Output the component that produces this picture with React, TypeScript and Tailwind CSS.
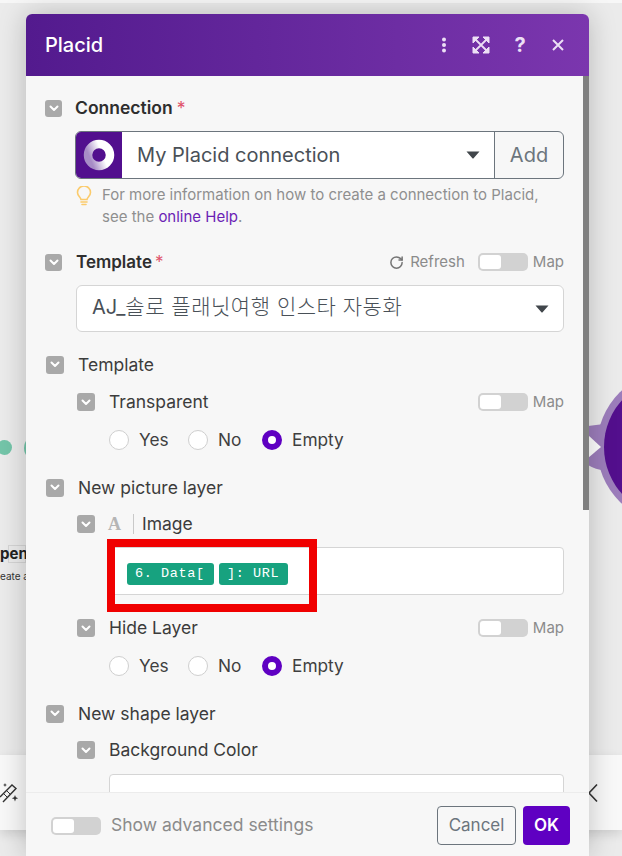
import React from 'react';
import { RotateCw } from 'lucide-react';

const font = { fontFamily: 'Inter, "Noto Sans CJK KR", sans-serif' };

function Check({ size = 18 }: { size?: number }) {
  return (
    <span
      className={`flex shrink-0 items-center justify-center rounded-[3px] bg-[#a9a9a9] ${size === 17 ? 'h-[17px] w-[17px]' : 'h-[18px] w-[18px]'}`}
    >
      <svg width="10" height="7" viewBox="0 0 10 7" fill="none" stroke="#fff" strokeWidth="2" strokeLinecap="round" strokeLinejoin="round">
        <path d="M1.5 1.5 5 5l3.5-3.5" />
      </svg>
    </span>
  );
}

function Toggle() {
  return (
    <span className="flex h-[18px] w-[50px] rounded-[5px] bg-[#d2d2d2] p-[2px]">
      <span className="h-[14px] w-[21px] rounded-[3px] bg-white" />
    </span>
  );
}

function MapToggle() {
  return (
    <span className="ml-auto flex items-center gap-[5px] text-[15px] text-[#8b8b8b]">
      <Toggle />
      <span className="mt-[1px]">Map</span>
    </span>
  );
}

function Caret() {
  return (
    <svg width="14" height="8" viewBox="0 0 14 8" className="shrink-0">
      <path d="M0.5 0.5h13L7.8 7a1 1 0 0 1-1.6 0z" fill="#41464b" />
    </svg>
  );
}

function Radio({ label, checked, className }: { label: string; checked?: boolean; className?: string }) {
  return (
    <span className={`flex items-center gap-[10px] ${className ?? ''}`}>
      {checked ? (
        <span className="h-[20px] w-[20px] rounded-full border-[6px] border-[#5f00c2] bg-white" />
      ) : (
        <span className="h-[20px] w-[20px] rounded-full border border-[#cfcfcf] bg-white" />
      )}
      {label}
    </span>
  );
}

function Radios({ className }: { className: string }) {
  return (
    <div className={`flex h-[20px] items-center pl-[83px] text-[17.3px] leading-none text-[#3f3f3f] ${className}`}>
      <Radio label="Yes" className="w-[79px]" />
      <Radio label="No" className="w-[74px]" />
      <Radio label="Empty" checked />
    </div>
  );
}

function Group({ label, className }: { label: string; className: string }) {
  return (
    <div className={`flex h-[19px] items-center gap-[14px] pl-[20px] text-[17.5px] text-[#3c3c3c] ${className}`}>
      <Check />
      <span className="mt-[2px]">{label}</span>
    </div>
  );
}

function Sub({ label, map, className }: { label: string; map?: boolean; className: string }) {
  return (
    <div className={`flex h-[18px] items-center gap-[14px] pl-[51px] pr-[25px] text-[17.5px] text-[#3c3c3c] ${className}`}>
      <Check />
      <span className="mt-[1px]">{label}</span>
      {map && <MapToggle />}
    </div>
  );
}

function Chip({ text, wide }: { text: string; wide?: boolean }) {
  return (
    <span
      className={`flex h-[22px] items-center whitespace-pre rounded-[3px] bg-[#17a27f] pl-[8px] text-[13.5px] tracking-[0.6px] text-white ${wide ? 'w-[69px]' : 'w-[87px]'}`}
      style={{ fontFamily: '"Liberation Mono", monospace' }}
    >
      {text}
    </span>
  );
}

export default function App() {
  return (
    <div className="relative h-[856px] w-[622px] overflow-hidden bg-[#ebebeb]" style={font}>
      <div className="h-[3px] bg-[#f7f7f7]" />

      {/* canvas behind the dialog */}
      <div className="absolute left-0 top-[755px] h-[75px] w-full bg-[#f8f8f8] shadow-[0_4px_10px_rgba(0,0,0,0.12)]" />
      <svg className="absolute left-0 top-[782px]" width="20" height="22" viewBox="0 0 20 22" fill="none" stroke="#333" strokeWidth="1.4">
        <path d="M0 15 12 3l4 3.500L3 20" />
        <path d="M3 11l4 4M6 8l4 4" strokeWidth="1" />
        <path d="M15 13l.9 2.300 2.300.9-2.300.9-.9 2.300-.9-2.300-2.300-.9 2.300-.9z" fill="#333" stroke="none" />
        <path d="M5 1l.6 1.400 1.400.6-1.400.6L5 5l-.6-1.400L3 3l1.400-.6z" fill="#333" stroke="none" />
      </svg>
      <svg className="absolute left-[587px] top-[783px]" width="12" height="20" viewBox="0 0 12 20" fill="none" stroke="#333" strokeWidth="1.6">
        <path d="M10 1.500 2 10l8 8.500" />
      </svg>
      <span className="absolute left-[-3px] top-[440px] h-[15px] w-[15px] rounded-full bg-[#74c5a9]" />
      <span className="absolute left-[24px] top-[435px] h-[26px] w-[26px] rounded-full bg-[#74c5a9]" />
      <span className="absolute left-[8px] top-[545px] h-[18px] w-[18px] border border-[#d5d5d5]" />
      <span className="absolute left-0 top-[544px] text-[15px] font-bold leading-5 text-[#222]">pen.</span>
      <span className="absolute left-0 top-[568px] text-[10px] leading-4 text-[#333]">eate a</span>
      <span className="absolute left-[597px] top-[370px] h-[154px] w-[154px] rounded-full bg-[#9c7dbb]" />
      <svg className="absolute left-[588px] top-[420px]" width="16" height="54" viewBox="0 0 16 54">
        <path d="M0 6Q8 5 16 4V50Q8 50 0 45z" fill="#9c7dbb" />
        <path d="M0 15 13 27 0 38z" fill="#fff" />
      </svg>
      <span className="absolute left-[604px] top-[377px] h-[140px] w-[140px] rounded-full bg-[#530f8d]" />

      {/* dialog */}
      <div className="relative ml-[26px] mt-[11px] flex h-[842px] w-[563px] flex-col rounded-t-[6px] bg-[#f7f7f7] shadow-[0_0_28px_rgba(0,0,0,0.22)]">
        <div className="flex h-[62px] shrink-0 items-center rounded-t-[6px] bg-gradient-to-r from-[#531a8e] to-[#7b36ae] pl-[19px] pr-[24px] text-white">
          <span className="text-[20px] font-medium">Placid</span>
          <svg className="ml-auto" width="6" height="16" viewBox="0 0 6 16" fill="#ecdff5">
            <circle cx="3" cy="2.500" r="2" />
            <circle cx="3" cy="8" r="2" />
            <circle cx="3" cy="13.500" r="2" />
          </svg>
          <svg className="ml-[25px]" width="18" height="18" viewBox="0 0 18 18" fill="#ecdff5" stroke="#ecdff5">
            <path d="M1 1h6L1 7zM17 1v6l-6-6zM1 17v-6l6 6zM17 17h-6l6-6z" strokeLinejoin="round" />
            <path d="M3 3l12 12M15 3 3 15" strokeWidth="1.800" fill="none" />
          </svg>
          <span className="ml-[23px] w-[14px] text-center text-[20px] font-bold leading-none text-[#ecdff5]">?</span>
          <svg className="ml-[24px]" width="14" height="14" viewBox="0 0 14 14" fill="none" stroke="#ecdff5" strokeWidth="2">
            <path d="M2 2l10 10M12 2 2 12" />
          </svg>
        </div>

        <div className="relative min-h-0 flex-1 overflow-hidden">
          <span className="absolute right-0 top-0 h-[434px] w-[6px] bg-[#808080]" />

          <div className="mt-[24px] flex h-[17px] items-center gap-[13px] pl-[19px] text-[17.5px] font-semibold text-[#2e2e2e]">
            <Check size={17} />
            <span>Connection<span className="ml-[4px] font-normal text-[#e0536b]">*</span></span>
          </div>

          <div className="ml-[49px] mt-[14px] flex h-[48px] w-[489px] overflow-hidden rounded-[6px] border border-[#6c757d]">
            <span className="flex w-[46px] shrink-0 items-center justify-center bg-[#520f8e]">
              <svg width="32" height="32" viewBox="0 0 32 32" fill="none">
                <defs>
                  <linearGradient id="placidRing" x1="0" y1="0.7" x2="1" y2="0.3">
                    <stop offset="0.1" stopColor="#a78cc6" />
                    <stop offset="0.65" stopColor="#ffffff" />
                  </linearGradient>
                </defs>
                <circle cx="16" cy="16" r="11" stroke="url(#placidRing)" strokeWidth="8.500" />
              </svg>
            </span>
            <span className="flex flex-1 items-center justify-between bg-white pl-[15px] pr-[14px] text-[20px] text-[#495057]">
              My Placid connection
              <Caret />
            </span>
            <span className="flex w-[69px] shrink-0 items-center justify-center border-l border-[#6c757d] text-[20px] text-[#6c757d]">Add</span>
          </div>

          <div className="relative ml-[76px] mt-[5px] w-[450px] text-[15px] leading-[22px] text-[#8f8f8f]">
            <svg className="absolute left-[-26px] top-[2px]" width="16" height="20" viewBox="0 0 16 20" fill="none" stroke="#fbcb6c" strokeWidth="1.600">
              <path d="M5 13.500C4.500 11 1.500 10 1.500 6.500a6.500 6.500 0 0 1 13 0C14.500 10 11.500 11 11 13.500z" />
              <path d="M5 16h6M6 18.500h4" strokeLinecap="round" />
            </svg>
            For more information on how to create a connection to Placid, see the <span className="text-[#6b1fb5]">online Help</span>.
          </div>

          <div className="mt-[25px] flex h-[18px] items-center pl-[19px] pr-[25px]">
            <Check size={17} />
            <span className="ml-[14px] mt-[2px] text-[17px] font-semibold text-[#2e2e2e]">Template<span className="ml-[3px] font-normal text-[#e0536b]">*</span></span>
            <span className="ml-auto flex items-center gap-[6px] text-[15px] text-[#8b8b8b]">
              <RotateCw size={15} strokeWidth={2.400} color="#757575" />
              Refresh
            </span>
            <span className="ml-[13px]"><MapToggle /></span>
          </div>

          <div className="ml-[50px] mt-[14px] flex h-[47px] w-[488px] items-center justify-between rounded-[6px] border border-[#d5d5d5] bg-white pl-[15px] pr-[14px] text-[20px] text-[#495057]">
            <span className="mb-[3px]">AJ_<span className="text-[21px] font-light tracking-[0.5px]">솔로 플래닛여행 인스타 자동화</span></span>
            <Caret />
          </div>

          <Group label="Template" className="mt-[23px]" />
          <Sub label="Transparent" map className="mt-[19px]" />
          <Radios className="mt-[19px]" />

          <Group label="New picture layer" className="mt-[28px]" />
          <div className="mt-[18px] flex h-[18px] items-center pl-[51px] text-[17.5px] text-[#3c3c3c]">
            <Check />
            <span className="ml-[13px] text-[18px] font-bold text-[#b5b5b5]" style={{ fontFamily: '"Liberation Serif", serif' }}>A</span>
            <span className="ml-[12px] h-[20px] w-px bg-[#c9c9c9]" />
            <span className="ml-[8px] mt-[1px]">Image</span>
          </div>

          <div className="relative ml-[83px] mt-[14px] flex h-[48px] w-[455px] items-center gap-[5px] rounded-[4px] border border-[#d5d5d5] bg-white pl-[17px] pt-[6px]">
            <Chip text="6. Data[" />
            <Chip text="]: URL" wide />
            <span className="absolute left-[-3px] top-[-9px] h-[73px] w-[210px] border-[8px] border-[#f00000]" />
          </div>

          <Sub label="Hide Layer" map className="mt-[24px]" />
          <Radios className="mt-[19px]" />

          <Group label="New shape layer" className="mt-[28px]" />
          <Sub label="Background Color" className="mt-[18px]" />
          <div className="ml-[83px] mt-[15px] h-[48px] w-[455px] rounded-[4px] border border-[#d5d5d5] bg-white" />
        </div>

        <div className="flex h-[64px] shrink-0 items-center border-t border-[#ececec] bg-[#f7f7f7] pl-[25px] pr-[19px] pt-[2px]">
          <Toggle />
          <span className="ml-[10px] text-[17.5px] text-[#8b8b8b]">Show advanced settings</span>
          <span className="ml-auto flex h-[39px] w-[79px] items-center justify-center rounded-[4px] border border-[#6c757d] text-[17px] text-[#6c757d]">Cancel</span>
          <span className="ml-[7px] flex h-[39px] w-[47px] items-center justify-center rounded-[4px] bg-[#5f00c2] text-[17px] font-semibold text-white">OK</span>
        </div>
      </div>
    </div>
  );
}
